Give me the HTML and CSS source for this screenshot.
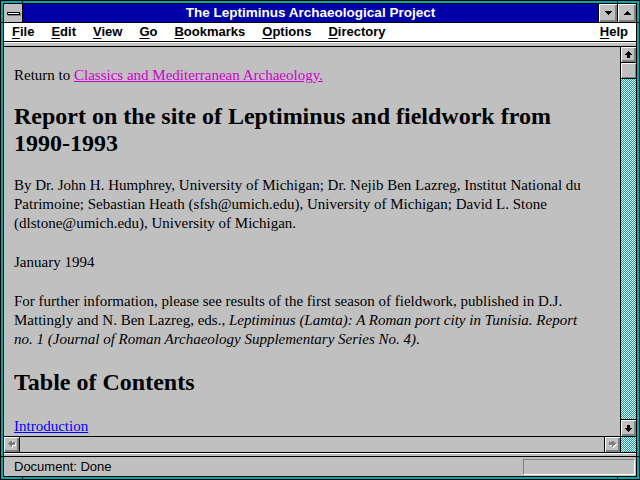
FILE: index.html
```html
<!DOCTYPE html>
<html>
<head>
<meta charset="utf-8">
<title>The Leptiminus Archaeological Project</title>
<link rel="stylesheet" href="styles.css">
</head>
<body>
<div class="frame">
  <div class="client">
    <div class="titlebar">
      <div class="sysbox"><span class="sysbar"></span></div>
      <div class="title">The Leptiminus Archaeological Project</div>
      <div class="tbtn"><svg width="7" height="4" viewBox="0 0 7 4" shape-rendering="crispEdges"><path d="M0 0h7v1h-1v1h-1v1h-1v1h-1v-1h-1v-1h-1v-1h-1z" fill="#000"/></svg></div>
      <div class="tbtn"><svg width="7" height="4" viewBox="0 0 7 4" shape-rendering="crispEdges"><path d="M3 0h1v1h1v1h1v1h1v1h-7v-1h1v-1h1v-1h1z" fill="#000"/></svg></div>
    </div>
    <div class="menubar">
      <span class="mi"><u>F</u>ile</span>
      <span class="mi"><u>E</u>dit</span>
      <span class="mi"><u>V</u>iew</span>
      <span class="mi"><u>G</u>o</span>
      <span class="mi"><u>B</u>ookmarks</span>
      <span class="mi"><u>O</u>ptions</span>
      <span class="mi"><u>D</u>irectory</span>
      <span class="mi help"><u>H</u>elp</span>
    </div>
    <div class="strip"></div>
    <div class="view">
      <div class="page">
        <p class="ret">Return to <a class="visited" href="#">Classics and Mediterranean Archaeology.</a></p>
        <h1 class="h1">Report on the site of Leptiminus and fieldwork from 1990-1993</h1>
        <p class="para">By Dr. John H. Humphrey, University of Michigan; Dr. Nejib Ben Lazreg, Institut National du Patrimoine; Sebastian Heath (sfsh@umich.edu), University of Michigan; David L. Stone (dlstone@umich.edu), University of Michigan.</p>
        <p class="para">January 1994</p>
        <p class="para">For further information, please see results of the first season of fieldwork, published in D.J. Mattingly and N. Ben Lazreg, eds., <i>Leptiminus (Lamta): A Roman port city in Tunisia. Report no. 1 (Journal of Roman Archaeology Supplementary Series No. 4)</i>.</p>
        <h2 class="h2">Table of Contents</h2>
        <p class="toc"><a class="link" href="#">Introduction</a></p>
      </div>
      <div class="vscroll">
        <div class="sbtn sbtn-up"><svg width="7" height="7" viewBox="0 0 7 7" shape-rendering="crispEdges"><path d="M3 0h1v1h1v1h1v1h1v1h-2v3h-3v-3h-2v-1h1v-1h1v-1h1z" fill="#000"/></svg></div>
        <div class="thumb"></div>
        <div class="track"></div>
        <div class="sbtn sbtn-down"><svg width="7" height="7" viewBox="0 0 7 7" shape-rendering="crispEdges"><path d="M3 7h1v-1h1v-1h1v-1h1v-1h-2v-3h-3v3h-2v1h1v1h1v1h1z" fill="#000"/></svg></div>
      </div>
    </div>
    <div class="hrow">
      <div class="hbtn hbtn-left"><svg width="8" height="8" viewBox="0 0 8 8" shape-rendering="crispEdges"><path d="M1 4h1v1h1v1h1v1h1v-2h3v-3h-3v-2h-1v1h-1v1h-1v1h-1z" fill="#fff"/><path d="M0 3h1v1h1v1h1v1h1v-2h3v-3h-3v-2h-1v1h-1v1h-1v1h-1z" fill="#808080"/></svg></div>
      <div class="htrack"></div>
      <div class="hbtn hbtn-right"><svg width="8" height="8" viewBox="0 0 8 8" shape-rendering="crispEdges"><path d="M8 4h-1v1h-1v1h-1v1h-1v-2h-3v-3h3v-2h1v1h1v1h1v1h1z" fill="#fff"/><path d="M7 3h-1v1h-1v1h-1v1h-1v-2h-3v-3h3v-2h1v1h1v1h1v1h1z" fill="#808080"/></svg></div>
      <div class="corner"></div>
    </div>
    <div class="strip2"></div>
    <div class="status">
      <span class="stext">Document: Done</span>
      <span class="sbox"></span>
    </div>
  </div>
  <span class="notch notch-tl"></span>
  <span class="notch notch-tr"></span>
  <span class="notch notch-bl"></span>
  <span class="notch notch-br"></span>
  <span class="notch notch-lt"></span>
  <span class="notch notch-rt"></span>
  <span class="notch notch-lb"></span>
  <span class="notch notch-rb"></span>
</div>
</body>
</html>
```
FILE: styles.css
```css
html, body {
  margin: 0;
  padding: 0;
  background: #00a8a8;
}
.frame {
  position: relative;
  box-sizing: border-box;
  width: 640px;
  height: 480px;
  border: 1px solid #000;
  padding: 2px;
  background: #00a8a8;
}
.client {
  box-sizing: border-box;
  height: 474px;
  border: 1px solid #000;
  display: flex;
  flex-direction: column;
  background: #c0c0c0;
  overflow: hidden;
}
.titlebar {
  display: flex;
  height: 18px;
  border-bottom: 1px solid #000;
  flex: none;
}
.sysbox {
  width: 18px;
  height: 18px;
  background: #c0c0c0;
  border-right: 1px solid #000;
  display: flex;
  align-items: center;
  justify-content: center;
}
.sysbar {
  display: block;
  width: 11px;
  height: 1px;
  background: #fff;
  border: 1px solid #000;
  box-shadow: 1px 1px 0 #808080;
}
.title {
  flex: 1;
  background: #0000a8;
  color: #fff;
  font: bold 13.5px/18px "Liberation Sans", Arial, sans-serif;
  text-align: center;
}
.tbtn {
  height: 18px;
  box-sizing: border-box;
  border-left: 1px solid #000;
  background: #c0c0c0;
  box-shadow: inset 1px 1px #fff, inset -1px -1px #808080, inset -2px -2px #808080;
  display: flex;
  align-items: center;
  justify-content: center;
  width: 19px;
}
.menubar {
  flex: none;
  display: flex;
  height: 18px;
  background: #fff;
  border-bottom: 1px solid #000;
  font: bold 13px/18px "Liberation Sans", Arial, sans-serif;
  color: #000;
}
.mi {
  padding: 0 8.5px;
}
.mi:first-child {
  padding-left: 8px;
}
.mi u {
  text-decoration-thickness: 1px;
  text-underline-offset: 2px;
}
.help {
  margin-left: auto;
  padding-right: 8px;
}
.strip {
  flex: none;
  height: 3px;
  border-top: 1px solid #fff;
  border-bottom: 1px solid #000;
  background: #c0c0c0;
}
.view {
  flex: none;
  height: 389px;
  display: flex;
}
.page {
  flex: 1;
  overflow: hidden;
  padding: 19px 24px 0 10px;
  font: 15px/19px "Liberation Serif", "Times New Roman", serif;
  color: #000;
}
.page p, .page h1, .page h2 {
  margin: 0;
}
.h1, .h2 {
  font-size: 24px;
  line-height: 27px;
  font-weight: bold;
}
.h1 { margin-top: 18px !important; }
.h1 + .para { margin-top: 19px; }
.para + .para { margin-top: 20px; }
.h2 { margin-top: 20px !important; }
.toc { margin-top: 21px !important; }
.visited { color: #cc00cc; }
.link { color: #0000ff; }
.vscroll {
  flex: none;
  width: 15px;
  border-left: 1px solid #000;
  display: flex;
  flex-direction: column;
}
.sbtn {
  flex: none;
  height: 15px;
  background: #c0c0c0;
  box-shadow: inset 1px 1px #fff, inset -1px -1px #808080, inset -2px -2px #808080;
  display: flex;
  align-items: center;
  justify-content: center;
}
.sbtn-up {
  border-bottom: 1px solid #000;
}
.sbtn-down {
  height: 16px;
  border-top: 1px solid #000;
}
.thumb {
  flex: none;
  height: 15px;
  background: #c0c0c0;
  border-bottom: 1px solid #000;
  box-shadow: inset 1px 1px #fff, inset -1px -1px #808080;
}
.track, .corner {
  background: repeating-conic-gradient(#00a8a8 0 25%, #ffffff 0 50%) 0 0 / 2px 2px;
}
.track {
  flex: 1;
}
.hrow {
  flex: none;
  display: flex;
  height: 15px;
  border-top: 1px solid #000;
  border-bottom: 1px solid #000;
}
.hbtn {
  flex: none;
  width: 15px;
  background: #c0c0c0;
  box-shadow: inset 1px 1px #fff, inset -1px -1px #808080, inset -2px -2px #808080;
  display: flex;
  align-items: center;
  justify-content: center;
}
.hbtn-left { border-right: 1px solid #000; }
.hbtn-right { border-left: 1px solid #000; }
.htrack {
  flex: 1;
  background: #c0c0c0;
}
.corner {
  flex: none;
  width: 15px;
  border-left: 1px solid #000;
}
.strip2 {
  flex: none;
  height: 2px;
  border-top: 1px solid #fff;
  border-bottom: 1px solid #000;
  background: #c0c0c0;
}
.status {
  flex: 1;
  display: flex;
  align-items: center;
  padding: 0 1px 0 10px;
  font: 13px/17px "Liberation Sans", Arial, sans-serif;
  color: #000;
}
.stext {
  flex: 1;
}
.sbox {
  width: 110px;
  height: 14px;
  border-top: 1px solid #808080;
  border-left: 1px solid #808080;
  border-bottom: 1px solid #fff;
  border-right: 1px solid #fff;
}
.notch {
  position: absolute;
  background: #000;
}
.notch-tl, .notch-tr { top: -1px; width: 1px; height: 4px; }
.notch-bl, .notch-br { bottom: -1px; width: 1px; height: 4px; }
.notch-tl, .notch-bl { left: 21px; }
.notch-tr, .notch-br { left: 616px; }
.notch-lt, .notch-lb { left: -1px; width: 4px; height: 1px; }
.notch-rt, .notch-rb { right: -1px; width: 4px; height: 1px; }
.notch-lt, .notch-rt { top: 21px; }
.notch-lb, .notch-rb { top: 455px; }
```
